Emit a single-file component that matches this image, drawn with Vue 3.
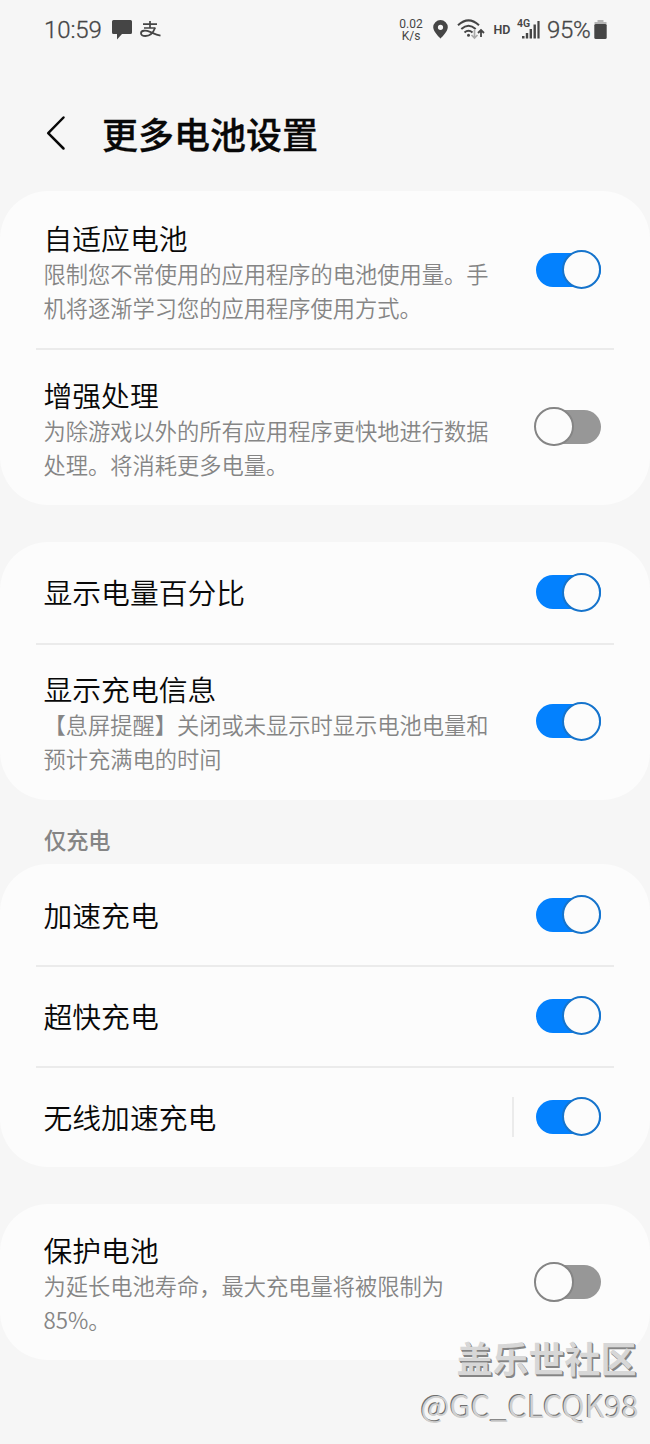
<script setup>
const groups = [
  {
    rows: [
      { title: '自适应电池', lines: ['限制您不常使用的应用程序的电池使用量。手', '机将逐渐学习您的应用程序使用方式。'], on: true, height: 157 },
      { title: '增强处理', lines: ['为除游戏以外的所有应用程序更快地进行数据', '处理。将消耗更多电量。'], on: false, height: 157 },
    ],
  },
  {
    rows: [
      { title: '显示电量百分比', on: true, height: 100.5 },
      { title: '显示充电信息', lines: ['【息屏提醒】关闭或未显示时显示电池电量和', '预计充满电的时间'], on: true, height: 157.5 },
    ],
  },
  {
    label: '仅充电',
    rows: [
      { title: '加速充电', on: true, height: 101 },
      { title: '超快充电', on: true, height: 101 },
      { title: '无线加速充电', on: true, height: 101, split: true },
    ],
  },
  {
    rows: [
      { title: '保护电池', lines: ['为延长电池寿命，最大充电量将被限制为', '85%。'], on: false, height: 156 },
    ],
  },
]
</script>

<template>
  <div class="screen">
    <header class="status">
      <span class="time">10:59</span>
      <svg class="chat" width="20" height="20" viewBox="0 0 20 20"><path d="M1.500 0h17Q20 0 20 1.500v11Q20 14 18.500 14H10l-5 5.500V14H1.500Q0 14 0 12.500v-11Q0 0 1.500 0z" fill="#454545" /></svg>
      <svg class="pay" width="21" height="18" viewBox="0 0 21 18" fill="none" stroke="#454545">
        <path d="M3 3.200h14M10 0v7M4 7h11.500" stroke-width="1.700" />
        <path d="M15 7c-1.500 4-5 8-9.500 8C2.500 15 1 13.800 1 12.200c0-3 5-3 8.500-1.500 3.500 1.400 6 3 11 4" stroke-width="1.800" />
      </svg>
      <span class="spacer"></span>
      <span class="rate"><span>0.02</span><span>K/s</span></span>
      <svg class="pin" width="15" height="19" viewBox="0 0 15 19"><path d="M7.500 0A7.300 7.300 0 0 0 .2 7.300C.2 12 7.500 18.500 7.500 18.500S14.800 12 14.800 7.300A7.300 7.300 0 0 0 7.500 0zm0 4.700a2.600 2.600 0 1 1 0 5.200 2.600 2.600 0 0 1 0-5.200z" fill="#454545" /></svg>
      <svg class="wifi" width="28" height="21" viewBox="0 0 28 21" fill="none" stroke="#454545" stroke-width="2">
        <path d="M1 6.200Q11.500-3.500 22 6.200M4.300 10Q11.500 3.500 18.700 10M7.500 13.500q4-3.500 8 0" />
        <circle cx="11.500" cy="16.300" r="1.500" fill="#454545" stroke="none" />
        <path d="M17.500 11v8m-3-3 3 3 3-3" stroke="#aaa" stroke-width="1.700" />
        <path d="M24 18v-7m-3 3 3-3 3 3" stroke-width="1.800" />
      </svg>
      <span class="hd">HD</span>
      <span class="signal">
        <span class="gen">4G</span>
        <svg width="18" height="19" viewBox="0 0 18 19" fill="#454545"><path d="M0 16h2.500v2.500H0zM3.800 13h2.400v5.500H3.800zM7.600 9H10v9.500H7.600zM11.500 4.500h2.400v14h-2.400zM15.400 1h2.200v17.500h-2.200z" /></svg>
      </span>
      <span class="percent">95%</span>
      <svg class="battery" width="13" height="19" viewBox="0 0 13 19"><path d="M3.500 0h6v2h3v4H.5V2h3z" fill="#b5b5b5" /><rect x=".3" y="4" width="12.400" height="15" rx="1.500" fill="#454545" /></svg>
    </header>

    <div class="heading">
      <svg class="back" width="20" height="36" viewBox="0 0 20 36"><path d="M17.500 2.500 2.200 18.200 17.500 33.500" fill="none" stroke="#080808" stroke-width="2.500" stroke-linecap="round" stroke-linejoin="round" /></svg>
      <h1>更多电池设置</h1>
    </div>

    <section v-for="(group, i) in groups" :key="i" class="group">
      <h2 v-if="group.label" class="label">{{ group.label }}</h2>
      <div class="card">
        <div v-for="row in group.rows" :key="row.title" class="row" :style="{ height: row.height + 'px' }">
          <div class="copy" :class="{ detailed: row.lines }">
            <div class="title">{{ row.title }}</div>
            <div v-for="line in row.lines" :key="line" class="desc">{{ line }}</div>
          </div>
          <span v-if="row.split" class="split"></span>
          <span class="switch" :class="{ on: row.on }"><i class="thumb"></i></span>
        </div>
      </div>
    </section>

    <div class="mark">
      <div class="community">盖乐世社区</div>
      <div class="author">@GC_CLCQK98</div>
    </div>
  </div>
</template>

<style>
body { background: #f6f6f6; }
</style>

<style scoped>
.screen {
  position: relative;
  box-sizing: border-box;
  width: 650px;
  height: 1444px;
  overflow: hidden;
  background: #f6f6f6;
  color: #080808;
  font-family: "Noto Sans CJK SC", sans-serif;
}
.status {
  display: flex;
  align-items: center;
  box-sizing: border-box;
  height: 60px;
  padding: 0 43px 0 44px;
  color: #454545;
  font-family: Roboto, sans-serif;
  font-size: 24px;
  white-space: nowrap;
}
.status svg { flex: none; display: block; }
.time, .percent { font-weight: 350; -webkit-text-stroke: 0.3px #454545; }
.time { width: 68px; letter-spacing: -0.1px; }
.chat { margin-top: -1px; }
.pay { margin-left: 8px; margin-top: -1px; }
.spacer { flex: 1; }
.rate {
  display: flex;
  flex-direction: column;
  width: 26px;
  align-items: center;
  font-size: 12px;
  line-height: 12px;
  margin-right: 9px;
}
.pin { margin-right: 9px; margin-top: -2px; }
.wifi { margin-right: 8.500px; margin-top: -2px; }
.hd { width: 23.500px; font-size: 12.500px; font-weight: 600; margin-top: -2px; }
.signal { display: flex; width: 30px; margin-top: -1px; }
.gen { width: 5px; font-size: 10.500px; line-height: 7px; font-weight: 600; }
.percent { width: 47px; letter-spacing: -0.3px; }
.battery { margin-top: -2px; }
.heading { display: flex; align-items: center; height: 131px; padding: 15px 0 0 46px; box-sizing: border-box; }
.back { display: block; margin-right: 36px; }
h1 { margin: 0; font-size: 36px; line-height: 52px; font-weight: 500; -webkit-text-stroke: 0.3px #080808; }
.group + .group { margin-top: 37px; }
.group + .group:has(.label) { margin-top: 0; }
.label { margin: 0; height: 64px; padding: 8px 0 0 44px; box-sizing: border-box; line-height: 62px; font-size: 22.200px; font-weight: 500; color: #858585; }
.card { border-radius: 48px; background: #fcfcfc; }
.row { position: relative; display: flex; align-items: center; box-sizing: border-box; padding: 0 49px 0 43.500px; }
.row + .row::before { content: ""; position: absolute; left: 36px; right: 36px; top: 0; height: 2px; background: #ebebeb; }
.copy { flex: 1; white-space: nowrap; }
.detailed { padding-top: 3.800px; }
.title { font-size: 28.800px; line-height: 38px; font-weight: 350; }
.desc { font-size: 22.250px; line-height: 33.500px; color: #858585; font-weight: 350; }
.desc + .desc { padding-top: 0.500px; }
.split { width: 1.500px; height: 40px; margin-right: 22.500px; background: #ebebeb; }
.switch { display: flex; align-items: center; box-sizing: border-box; width: 65px; height: 34px; border-radius: 17px; background: #979797; }
.thumb { box-sizing: border-box; flex: none; width: 39.500px; height: 39.500px; margin-left: -2px; border: 2px solid #858585; border-radius: 50%; background: #fcfcfc; }
.switch.on { justify-content: flex-end; background: #0381fe; }
.on .thumb { border-color: #1674cc; }
.mark { position: absolute; right: 13px; top: 1332px; text-align: right; white-space: nowrap; }
.community { font-size: 36px; line-height: 50px; margin-right: 0.500px; font-weight: 700; color: #d7d7d7; text-shadow: 1px 1px 0 #858585, 1.500px 1.500px 0 #858585; }
.author { font-size: 31px; line-height: 46px; margin-right: -1.500px; font-weight: 350; color: #d0d0d0; text-shadow: -1px -1px 0 #707070; }
</style>
